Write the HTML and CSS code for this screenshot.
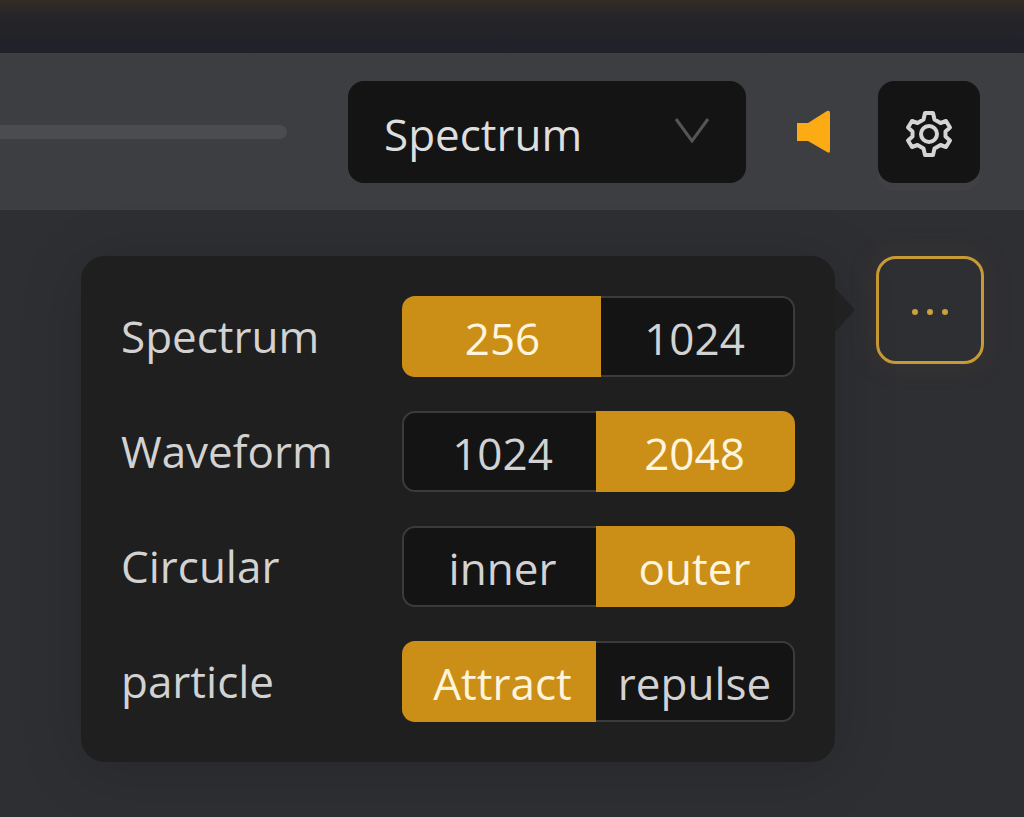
FILE: index.html
```
<!DOCTYPE html>
<html lang="en">
<head>
    <meta charset="utf-8">
    <title>Audio Visualizer</title>
    <link rel="stylesheet" href="styles.css">
</head>
<body>
    <div class="topbar"></div>

    <!-- Player controls -->
    <header class="toolbar">
        <input type="range" class="progress" min="0" max="100" value="0" aria-label="Progress">
        <div class="select-box">
            <select class="select" aria-label="Visualizer">
                <option>Spectrum</option>
                <option>Waveform</option>
                <option>Circular</option>
                <option>particle</option>
            </select>
            <svg class="arrow" viewBox="0 0 36 28"><path d="M2 2 L18 24 L34 2"/></svg>
        </div>
        <button class="btn-sound" aria-label="Sound">
            <svg viewBox="0 0 34 44"><path d="M0 13 H11 L30 1 Q33 0 33 3 V41 Q33 44 30 42 L11 31 H0 Z"/></svg>
        </button>
        <button class="btn-setting" aria-label="Settings">
            <svg viewBox="0 0 48 48">
                <path d="M20 3 H28 L29.500 9.500 L35.500 13 L41 11 L45 17.500 L40.500 21.500 V26.500 L45 30.500 L41 37 L35.500 35 L29.500 38.500 L28 45 H20 L18.500 38.500 L12.500 35 L7 37 L3 30.500 L7.500 26.500 V21.500 L3 17.500 L7 11 L12.500 13 L18.500 9.500 Z"/>
                <circle cx="24" cy="24" r="8"/>
            </svg>
        </button>
    </header>

    <!-- Options -->
    <main class="content">
        <div class="popover">
            <fieldset class="row">
                <legend>Spectrum</legend>
                <div class="group">
                    <label class="option raised"><input type="radio" name="spectrum" checked><span>256</span></label>
                    <label class="option"><input type="radio" name="spectrum"><span>1024</span></label>
                </div>
            </fieldset>
            <fieldset class="row">
                <legend>Waveform</legend>
                <div class="group">
                    <label class="option"><input type="radio" name="waveform"><span>1024</span></label>
                    <label class="option"><input type="radio" name="waveform" checked><span>2048</span></label>
                </div>
            </fieldset>
            <fieldset class="row">
                <legend>Circular</legend>
                <div class="group">
                    <label class="option"><input type="radio" name="circular"><span>inner</span></label>
                    <label class="option"><input type="radio" name="circular" checked><span>outer</span></label>
                </div>
            </fieldset>
            <fieldset class="row">
                <legend>particle</legend>
                <div class="group">
                    <label class="option"><input type="radio" name="particle" checked><span>Attract</span></label>
                    <label class="option"><input type="radio" name="particle"><span>repulse</span></label>
                </div>
            </fieldset>
        </div>
        <button class="btn-more" aria-label="More">
            <svg viewBox="0 0 38 8"><circle cx="4" cy="4" r="3"/><circle cx="19" cy="4" r="3"/><circle cx="34" cy="4" r="3"/></svg>
        </button>
    </main>
</body>
</html>
```
FILE: styles.css
```
* { box-sizing: border-box; }
body { margin: 0; min-height: 100vh; background: #2e2f33; color: #d2d2d2; font-family: "Open Sans", "Noto Sans", sans-serif; font-size: 44px; }
button { padding: 0; border: none; background: none; cursor: pointer; display: flex; align-items: center; justify-content: center; }

.topbar { height: 53px; background: linear-gradient(#342c26, #262528 15px, #20212a); }

.toolbar { display: flex; align-items: center; height: 157px; padding-right: 44px; background: #3d3e42; }
.progress { -webkit-appearance: none; appearance: none; flex: 1; min-width: 0; height: 14px; margin: 0 61px 0 0; border-radius: 0 7px 7px 0; background: #4b4c50; }
.progress::-webkit-slider-thumb { -webkit-appearance: none; width: 0; height: 0; }
.select-box { position: relative; width: 398px; }
.select { -webkit-appearance: none; appearance: none; width: 100%; height: 102px; padding: 4px 36px 0; border: none; border-radius: 16px; background: #141414; color: #dedede; font: inherit; }
.arrow { position: absolute; right: 36px; top: 36px; width: 36px; height: 28px; fill: none; stroke: #555; stroke-width: 3; pointer-events: none; }
.btn-sound { margin: 0 47px 0 51px; }
.btn-sound svg { width: 34px; height: 44px; fill: #fcab14; }
.btn-setting { width: 102px; height: 102px; border-radius: 16px; background: #141414; box-shadow: 0 8px 0 #414145; }
.btn-setting svg { width: 48px; height: 48px; margin-top: 4px; fill: none; stroke: #d4d4d4; stroke-width: 4; stroke-linejoin: round; }

.content { display: flex; align-items: flex-start; justify-content: flex-end; gap: 41px; padding: 46px 40px 40px; }
.popover { position: relative; width: 754px; padding: 40px; border-radius: 24px; background: #1f1f1f; box-shadow: 0 8px 64px rgba(0, 0, 0, 0.16); display: flex; flex-direction: column; gap: 34px; }
.popover::after { content: ""; position: absolute; left: 100%; top: 32px; border: 22px solid transparent; border-left: 20px solid #212122; border-right: none; }
.row { display: flex; justify-content: space-between; margin: 0; padding: 0; border: none; min-width: 0; }
.row legend { float: left; padding: 0; line-height: 80px; }
.group { display: flex; width: 393px; margin-left: auto; }
.option { flex: 1; height: 81px; cursor: pointer; }
.option + .option { margin-left: -5px; }
.option input { position: absolute; opacity: 0; }
.option span { position: relative; display: block; height: 100%; border: 2px solid #3b3b3b; background: #141414; line-height: 80px; text-align: center; }
.option:first-child span { border-right: none; border-radius: 13px 0 0 13px; }
.option:last-child span { border-left: none; border-radius: 0 13px 13px 0; }
.option input:checked + span { border-color: #cb8f17; background: #cb8f17; color: #fff4dc; }
.raised span { z-index: 1; }

.btn-more { width: 108px; height: 108px; padding-top: 4px; border: 3px solid #c79a35; border-radius: 20px; box-shadow: 0 0 20px 8px rgba(80, 60, 45, 0.2); }
.btn-more svg { width: 38px; height: 8px; fill: #cda23a; }
```
